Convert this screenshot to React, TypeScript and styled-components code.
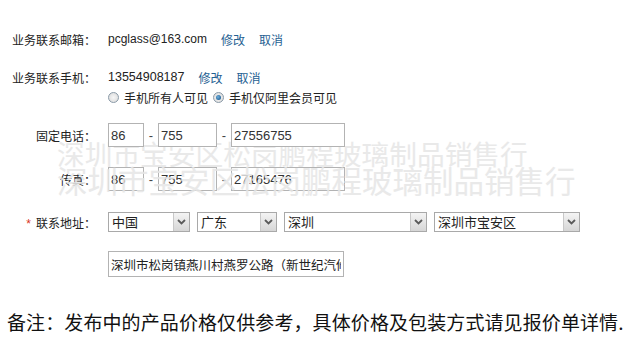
import React from "react";
import styled, { createGlobalStyle } from "styled-components";

const Global = createGlobalStyle`
  html, body {
    margin: 0;
    padding: 0;
    background: #fff;
  }
  body {
    width: 636px;
    height: 353px;
    overflow: hidden;
    font-family: "Liberation Sans", "Noto Sans CJK SC", sans-serif;
    color: #222;
  }
`

const Page = styled.div`
  position: relative;
  width: 636px;
  height: 353px;
  overflow: hidden;
  display: flex;
  flex-direction: column;
`

const Row = styled.div<{ $top: number; $h: number }>`
  display: flex;
  align-items: center;
  margin-top: ${p => p.$top}px;
  height: ${p => p.$h}px;
  position: relative;
  z-index: 1;
`

const Label = styled.div`
  width: 96px;
  margin-right: 12px;
  text-align: right;
  font-family: "Noto Sans CJK SC", sans-serif;
  font-size: 12px;
  color: #222;
  white-space: nowrap;
  >em{
    color: #d8341c;
    font-style: normal;
    font-family: "Liberation Sans", sans-serif;
    margin-right: 5px;
  }
`

const Value = styled.span<{ $size?: number }>`
  font-family: "Liberation Sans", "Noto Sans CJK SC", sans-serif;
  font-size: ${p => p.$size ?? 12}px;
  color: #222;
`

const Link = styled.a`
  font-family: "Noto Sans CJK SC", sans-serif;
  font-size: 12px;
  color: #1f6192;
  text-decoration: none;
  margin-left: 14px;
`

const Radios = styled.div`
  display: flex;
  align-items: center;
  margin-left: 108px;
  font-family: "Noto Sans CJK SC", sans-serif;
  font-size: 12px;
  color: #222;
  >label{
    display: flex;
    align-items: center;
    margin-right: 5px;
  }
`

const Radio = styled.span<{ $on?: boolean }>`
  display: inline-block;
  box-sizing: border-box;
  width: 11px;
  height: 11px;
  border-radius: 50%;
  border: 1px solid #8a9aa8;
  background: radial-gradient(circle at 50% 50%, #f6f6f6 0, #e1e1e1 70%, #d0d0d0 100%);
  margin-right: 5px;
  position: relative;
  &::after{
    content: '';
    display: ${p => (p.$on ? "block" : "none")};
    position: absolute;
    left: 2px;
    top: 2px;
    width: 5px;
    height: 5px;
    border-radius: 50%;
    background: radial-gradient(circle at 40% 40%, #6fb0dc 0, #1f5f96 80%);
  }
`

const Field = styled.div<{ $w: number; $h?: number }>`
  box-sizing: border-box;
  width: ${p => p.$w}px;
  height: ${p => p.$h ?? 24}px;
  border: 1px solid #b3b3b3;
  display: flex;
  align-items: center;
  padding-left: 2px;
  font-family: "Liberation Sans", sans-serif;
  font-size: 13px;
  color: #333;
  background: #fff;
`

const Dash = styled.span`
  width: 14px;
  text-align: center;
  font-family: "Liberation Sans", sans-serif;
  font-size: 13px;
  color: #444;
`

const Select = styled.div<{ $w: number }>`
  box-sizing: border-box;
  width: ${p => p.$w}px;
  height: 20px;
  border: 1px solid #a9a9a9;
  display: flex;
  margin-right: 7px;
  background: #fff;
  >span{
    flex: 1;
    padding-left: 3px;
    font-family: "Noto Sans CJK SC", sans-serif;
    font-size: 13px;
    line-height: 18px;
    color: #222;
  }
`

const Arrow = styled.div`
  width: 16px;
  height: 18px;
  box-sizing: border-box;
  border-left: 1px solid #c8c8c8;
  background: linear-gradient(#f4f4f4, #d6d6d6);
  display: flex;
  align-items: center;
  justify-content: center;
`

const Street = styled.input`
  box-sizing: border-box;
  width: 236px;
  height: 26px;
  margin: 0 0 0 108px;
  border: 1px solid #b3b3b3;
  padding: 0 2px;
  font-family: "Noto Sans CJK SC", sans-serif;
  font-size: 12.5px;
  color: #222;
  outline: none;
`

const Note = styled.div`
  margin-top: 33px;
  padding-left: 7px;
  font-family: "Noto Sans CJK SC", sans-serif;
  font-size: 19px;
  line-height: 24px;
  color: #111;
  white-space: nowrap;
  letter-spacing: 0.1px;
`

const Watermark = styled.div<{ $top: number; $size: number }>`
  position: absolute;
  left: 57px;
  top: ${p => p.$top}px;
  font-family: "Noto Sans CJK SC", sans-serif;
  font-size: ${p => p.$size}px;
  line-height: 1;
  color: #e6e6e6;
  white-space: nowrap;
  z-index: ${p => (p.$size > 29 ? 2 : 0)};
  opacity: 0.85;
  pointer-events: none;
`

function Chevron() {
  return (
    <svg width="9" height="6" viewBox="0 0 9 6">
      <path d="M1 1 L4.5 4.5 L8 1" stroke="#5a5a5a" strokeWidth="1.8" fill="none" />
    </svg>
  )
}

function Drop({ w, text }: { w: number; text: string }) {
  return (
    <Select $w={w}>
      <span>{text}</span>
      <Arrow><Chevron /></Arrow>
    </Select>
  )
}

function App() {
  return (
    <Page>
      <Global />
      <Watermark $top={140} $size={27.7}>深圳市宝安区松岗鹏程玻璃制品销售行</Watermark>
      <Watermark $top={165} $size={30.5}>深圳市宝安区松岗鹏程玻璃制品销售行</Watermark>

      <Row $top={29} $h={20}>
        <Label>业务联系邮箱：</Label>
        <Value>pcglass@163.com</Value>
        <Link>修改</Link>
        <Link>取消</Link>
      </Row>

      <Row $top={18} $h={20}>
        <Label>业务联系手机：</Label>
        <Value $size={12.5}>13554908187</Value>
        <Link>修改</Link>
        <Link>取消</Link>
      </Row>
      <Row $top={1} $h={18}>
        <Radios>
          <label><Radio />手机所有人可见</label>
          <label><Radio $on />手机仅阿里会员可见</label>
        </Radios>
      </Row>

      <Row $top={17} $h={24}>
        <Label>固定电话：</Label>
        <Field $w={36}>86</Field>
        <Dash>-</Dash>
        <Field $w={59}>755</Field>
        <Dash>-</Dash>
        <Field $w={114}>27556755</Field>
      </Row>

      <Row $top={20} $h={24}>
        <Label>传真：</Label>
        <Field $w={36}>86</Field>
        <Dash>-</Dash>
        <Field $w={59}>755</Field>
        <Dash>-</Dash>
        <Field $w={114}>27165476</Field>
      </Row>

      <Row $top={21} $h={20}>
        <Label><em>*</em>联系地址：</Label>
        <Drop w={82} text="中国" />
        <Drop w={80} text="广东" />
        <Drop w={143} text="深圳" />
        <Drop w={146} text="深圳市宝安区" />
      </Row>

      <Row $top={19} $h={26}>
        <Street readOnly defaultValue="深圳市松岗镇燕川村燕罗公路（新世纪汽修厂旁）" />
      </Row>

      <Note>备注：发布中的产品价格仅供参考，具体价格及包装方式请见报价单详情.</Note>
    </Page>
  )
}

export default App
